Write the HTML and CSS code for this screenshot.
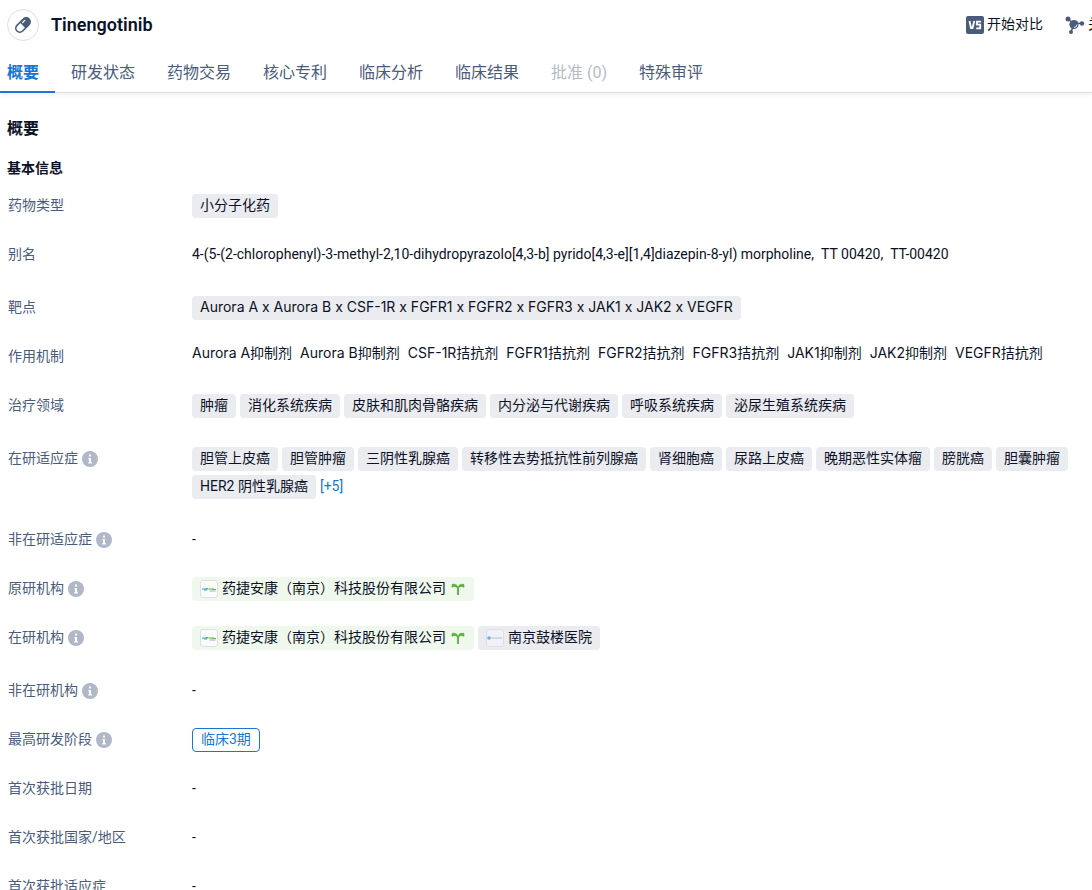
FILE: index.html
```html
<!DOCTYPE html>
<html lang="zh-CN">
<head>
    <meta charset="UTF-8">
    <meta name="viewport" content="width=device-width, initial-scale=1.0">
    <title>Tinengotinib</title>
    <link rel="stylesheet" href="styles.css">
</head>
<body>
    <!-- Shared icons -->
    <svg class="sprite" aria-hidden="true">
        <symbol id="info" viewBox="0 0 16 16">
            <circle cx="8" cy="8" r="8" fill="#b0b7c6"/>
            <path d="M7 3.500h2v2H7zM6.500 7H9v4.300h1v1.200H6.200v-1.200H7V8.200h-.5z" fill="#fff"/>
        </symbol>
        <symbol id="sprout" viewBox="0 0 14 14">
            <path d="M7 13V6" stroke="#52b035" stroke-width="1.800" fill="none"/>
            <path d="M7 6.500C6.800 3 4.500 1.500 1 2.500L1 5.500C2.500 3.800 5 4 7 6.500zM7 6.500C7.200 3 9.500 1.500 13 2.500L13 5.500C11.500 3.800 9 4 7 6.500z" fill="#52b035" stroke="#52b035" stroke-width=".6"/>
        </symbol>
        <symbol id="transthera" viewBox="0 0 18 18">
            <rect x=".5" y=".5" width="17" height="17" rx="2.5" fill="#fff" fill-opacity=".6" stroke="#dcdfe8"/>
            <path d="M2 9h2.500M4 9.800h3M5.500 8.500h1.500" stroke="#3d9bd5" stroke-width="1.200" fill="none"/>
            <path d="M7 9.500l1-1.500M8.500 9h3.500M12 9.800l1.500-1.300M13.500 9.500h2.500" stroke="#65b33c" stroke-width="1.200" fill="none"/>
            <path d="M9.500 11h6" stroke="#778" stroke-width=".6"/>
        </symbol>
        <symbol id="hospital" viewBox="0 0 18 18">
            <rect x=".5" y=".5" width="17" height="17" rx="2.5" fill="#f1f2f5" stroke="#dcdfe8"/>
            <circle cx="3" cy="9" r="1.800" fill="#70add8"/>
            <path d="M5 9h11" stroke="#b3bfca" stroke-width="1"/>
        </symbol>
    </svg>

    <header class="header">
        <span class="avatar">
            <svg width="20" height="20" viewBox="0 0 20 20">
                <g transform="rotate(-45 10 10)">
                    <rect x="1.500" y="6" width="17" height="8" rx="4" fill="none" stroke="#4a5b7c" stroke-width="1.600"/>
                    <path d="M9.500 6h5a4 4 0 0 1 0 8h-5z" fill="#4a5b7c"/>
                    <path d="M11.500 8h3" stroke="#fff" stroke-width="1.200" stroke-linecap="round"/>
                </g>
            </svg>
        </span>
        <h1>Tinengotinib</h1>
        <div class="actions">
            <button type="button">
                <svg width="18" height="18" viewBox="0 0 18 18">
                    <rect width="18" height="18" rx="2" fill="#4a5b7c"/>
                    <path d="M3.500 5l1.500 7h1.500l1.800-7M15 5.700h-4v3h3.200v3.600h-4" fill="none" stroke="#fff" stroke-width="1.800"/>
                </svg>
                <span>开始对比</span>
            </button>
            <button type="button">
                <svg width="20" height="20" viewBox="0 0 20 20">
                    <path d="M3 4l6 5 8-1M9 9l-3 8" stroke="#4a5b7c" stroke-width="1.500" fill="none"/>
                    <g fill="#4a5b7c"><circle cx="3" cy="4" r="2.500"/><circle cx="9" cy="9.500" r="4.600"/><circle cx="17" cy="8.500" r="2.200"/><circle cx="6" cy="17" r="2"/></g>
                    <path d="M12 9.500a3 3 0 0 1-3 3" stroke="#fff" stroke-width=".9" fill="none"/>
                </svg>
                <span>关联图谱</span>
            </button>
        </div>
    </header>

    <nav class="tabs">
        <a class="active" href="#overview">概要</a>
        <a href="#status">研发状态</a>
        <a href="#deals">药物交易</a>
        <a href="#patents">核心专利</a>
        <a href="#analysis">临床分析</a>
        <a href="#results">临床结果</a>
        <a class="disabled" href="#approval">批准 (0)</a>
        <a href="#review">特殊审评</a>
    </nav>

    <main id="overview">
        <h2>概要</h2>
        <h3>基本信息</h3>
        <dl>
            <div class="row">
                <dt>药物类型</dt>
                <dd><span class="chip">小分子化药</span></dd>
            </div>
            <div class="row loose">
                <dt>别名</dt>
                <dd class="alias"><span>4-(5-(2-chlorophenyl)-3-methyl-2,10-dihydropyrazolo[4,3-b] pyrido[4,3-e][1,4]diazepin-8-yl) morpholine,</span><span>TT 00420,</span><span>TT-00420</span></dd>
            </div>
            <div class="row">
                <dt>靶点</dt>
                <dd><a class="chip latin" href="#target">Aurora A x Aurora B x CSF-1R x FGFR1 x FGFR2 x FGFR3 x JAK1 x JAK2 x VEGFR</a></dd>
            </div>
            <div class="row">
                <dt>作用机制</dt>
                <dd class="latin mechanism"><span>Aurora A抑制剂</span><span>Aurora B抑制剂</span><span>CSF-1R拮抗剂</span><span>FGFR1拮抗剂</span><span>FGFR2拮抗剂</span><span>FGFR3拮抗剂</span><span>JAK1抑制剂</span><span>JAK2抑制剂</span><span>VEGFR拮抗剂</span></dd>
            </div>
            <div class="row loose">
                <dt>治疗领域</dt>
                <dd>
                    <span class="chip">肿瘤</span>
                    <span class="chip">消化系统疾病</span>
                    <span class="chip">皮肤和肌肉骨骼疾病</span>
                    <span class="chip">内分泌与代谢疾病</span>
                    <span class="chip">呼吸系统疾病</span>
                    <span class="chip">泌尿生殖系统疾病</span>
                </dd>
            </div>
            <div class="row loose">
                <dt>在研适应症<svg class="info"><use href="#info"/></svg></dt>
                <dd>
                    <a class="chip" href="#d1">胆管上皮癌</a>
                    <a class="chip" href="#d2">胆管肿瘤</a>
                    <a class="chip" href="#d3">三阴性乳腺癌</a>
                    <a class="chip" href="#d4">转移性去势抵抗性前列腺癌</a>
                    <a class="chip" href="#d5">肾细胞癌</a>
                    <a class="chip" href="#d6">尿路上皮癌</a>
                    <a class="chip" href="#d7">晚期恶性实体瘤</a>
                    <a class="chip" href="#d8">膀胱癌</a>
                    <a class="chip" href="#d9">胆囊肿瘤</a>
                    <a class="chip" href="#d10">HER2 阴性乳腺癌</a>
                    <button class="more" type="button">[+5]</button>
                </dd>
            </div>
            <div class="row">
                <dt>非在研适应症<svg class="info"><use href="#info"/></svg></dt>
                <dd>-</dd>
            </div>
            <div class="row">
                <dt>原研机构<svg class="info"><use href="#info"/></svg></dt>
                <dd>
                    <a class="chip org green" href="#org1"><svg class="logo"><use href="#transthera"/></svg><span>药捷安康（南京）科技股份有限公司</span><svg class="sprout"><use href="#sprout"/></svg></a>
                </dd>
            </div>
            <div class="row loose">
                <dt>在研机构<svg class="info"><use href="#info"/></svg></dt>
                <dd>
                    <a class="chip org green" href="#org1"><svg class="logo"><use href="#transthera"/></svg><span>药捷安康（南京）科技股份有限公司</span><svg class="sprout"><use href="#sprout"/></svg></a>
                    <a class="chip org" href="#org2"><svg class="logo"><use href="#hospital"/></svg><span>南京鼓楼医院</span></a>
                </dd>
            </div>
            <div class="row">
                <dt>非在研机构<svg class="info"><use href="#info"/></svg></dt>
                <dd>-</dd>
            </div>
            <div class="row">
                <dt>最高研发阶段<svg class="info"><use href="#info"/></svg></dt>
                <dd><span class="chip phase">临床3期</span></dd>
            </div>
            <div class="row">
                <dt>首次获批日期</dt>
                <dd>-</dd>
            </div>
            <div class="row">
                <dt>首次获批国家/地区</dt>
                <dd>-</dd>
            </div>
            <div class="row">
                <dt>首次获批适应症</dt>
                <dd>-</dd>
            </div>
        </dl>
    </main>
</body>
</html>
```
FILE: styles.css
```css
* {
    box-sizing: border-box;
}
html {
    overflow: hidden;
}
body {
    margin: 0;
    background-color: #fff;
    color: #0b1127;
    font-family: Roboto, "Noto Sans CJK SC", sans-serif;
    font-size: 14px;
    line-height: 22px;
}
h1, h2, h3, dl, dd {
    margin: 0;
}
a {
    color: inherit;
    text-decoration: none;
}
button {
    padding: 0;
    border: none;
    background: none;
    color: inherit;
    font: inherit;
    cursor: pointer;
}
svg {
    flex: none;
}
.sprite {
    display: none;
}

/* Title bar */
.header {
    display: flex;
    align-items: center;
    height: 50px;
    padding-left: 7px;
    overflow: hidden;
}
.avatar {
    display: flex;
    align-items: center;
    justify-content: center;
    width: 32px;
    height: 32px;
    border: 1px solid #dcdfe6;
    border-radius: 50%;
}
h1 {
    margin-left: 12px;
    font-size: 18px;
    font-weight: 600;
}
.actions {
    display: flex;
    gap: 22px;
    margin-left: auto;
    margin-right: -52px; /* last action runs past the edge */
    white-space: nowrap;
}
.actions button {
    display: flex;
    align-items: center;
    gap: 3px;
}
.actions span {
    padding-bottom: 2px;
}

/* Tabs */
.tabs {
    display: flex;
    height: 43px;
    border-bottom: 1px solid #dcdfe6;
    box-shadow: 0 2px 4px rgba(0, 0, 0, 0.06);
    color: #4a5b7c;
    font-size: 16px;
    line-height: 46px;
    white-space: nowrap;
}
.tabs a {
    height: 43px;
    padding: 0 16px;
}
.tabs .active {
    padding-left: 7px;
    border-bottom: 2px solid #1976d2;
    color: #1976d2;
    font-weight: 600;
}
.tabs .disabled {
    color: #b4bbc8;
}

/* Content */
main {
    padding: 24px 8px 0 7px;
}
h2 {
    font-size: 16px;
    line-height: 24px;
}
h3 {
    margin: 16px 0 15px;
    font-size: 14px;
}
.row {
    display: grid;
    grid-template-columns: 184px 1fr;
    margin-bottom: 25px;
    padding-left: 1px;
}
.row.loose {
    margin-bottom: 29px;
}
dt {
    display: flex;
    align-self: start;
    gap: 4px;
    height: 24px;
    color: #4a5b7c;
}
.info {
    width: 16px;
    height: 16px;
    margin-top: 4px;
}
dd {
    display: flex;
    flex-wrap: wrap;
    gap: 4px;
    min-height: 24px;
}
.chip {
    height: 24px;
    padding: 0 8px;
    border-radius: 4px;
    background-color: #ebecf0;
}
.alias {
    column-gap: 7px;
}
.latin {
    font-family: Inter, "Noto Sans CJK SC", sans-serif;
}
.mechanism {
    column-gap: 8px;
    line-height: 16px;
}
.more {
    height: 22px;
    color: #1976d2;
}
.org {
    display: flex;
    align-items: center;
    gap: 4px;
}
.org span {
    padding-bottom: 3px;
}
.org.green {
    background-color: #f0f8ed;
}
.logo {
    width: 18px;
    height: 18px;
}
.sprout {
    width: 16px;
    height: 14px;
}
.phase {
    border: 1px solid #1976d2;
    background-color: #fff;
    color: #1976d2;
    line-height: 20px;
}
```
